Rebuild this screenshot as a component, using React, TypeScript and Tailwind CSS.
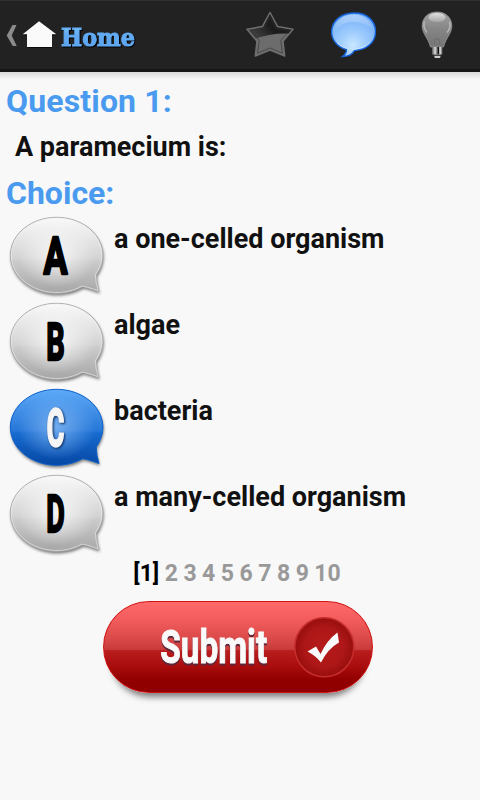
import { useState } from "react";

const choices = [
  { letter: "A", text: "a one-celled organism", x: 36, width: 24 },
  { letter: "B", text: "algae", x: 38.8, width: 18.5 },
  { letter: "C", text: "bacteria", x: 39.2, width: 17.5 },
  { letter: "D", text: "a many-celled organism", x: 38.8, width: 18.5 },
];

const pages = [2, 3, 4, 5, 6, 7, 8, 9, 10];

const BUBBLE =
  "M88.7 62.5 A46.3 38 0 1 0 75 74.3 Q79 74.5 91.5 79 Q89 71 88.7 62.5 Z";

const HomeLink = () => (
  <a className="flex h-full items-center">
    <svg width="144" height="72" viewBox="0 0 144 72">
      <defs>
        <linearGradient id="homeText" x1="0" y1="0" x2="0" y2="1">
          <stop offset="0.2" stopColor="#75bdf5" />
          <stop offset="0.45" stopColor="#61aaf2" />
          <stop offset="1" stopColor="#5ba1ee" />
        </linearGradient>
      </defs>
      <path d="M12.5 26h4L11.7 36.5l5 10.5h-4L6.7 36.5z" fill="#8b8b8b" />
      <path d="M39.5 23.5 57 36.5h-5V49H27.5V36.5h-4.5z" fill="#000" opacity="0.7" />
      <path d="M39 22.3 56.3 35.3H52V48H27V35.3h-4.3z" fill="#fafafa" />
      <text
        x="61"
        y="46.5"
        textLength="74"
        lengthAdjust="spacingAndGlyphs"
        className="font-['DejaVu_Serif'] text-[24.5px] font-bold drop-shadow-[1px_1.5px_0.5px_#000]"
        fill="url(#homeText)"
        stroke="#61aaf2"
        strokeWidth="1.1"
      >
        Home
      </text>
    </svg>
  </a>
);

const StarIcon = () => (
  <svg width="50" height="50" viewBox="0 0 50 50">
    <defs>
      <linearGradient id="starDark" x1="0" y1="0.6" x2="0.7" y2="0">
        <stop offset="0" stopColor="#565656" />
        <stop offset="0.6" stopColor="#1c1c1c" />
      </linearGradient>
      <clipPath id="starClip">
        <path d="M25 2.5 32.6 16.6 48 19.2 38 31.2 39.7 46 25 40 10.3 46 12 31.2 2 19.2 17.4 16.6z" />
      </clipPath>
    </defs>
    <g clipPath="url(#starClip)">
      <path d="M0 0h50v50H0z" fill="url(#starDark)" />
      <path d="M0 33Q24 21 50 24V50H0z" fill="#6c6c6c" />
    </g>
    <path
      d="M25 2.5 32.6 16.6 48 19.2 38 31.2 39.7 46 25 40 10.3 46 12 31.2 2 19.2 17.4 16.6z"
      fill="none"
      stroke="#6f6f6f"
      strokeWidth="1.5"
      strokeLinejoin="round"
    />
    <path
      d="M25 6.5 31 18.4 44.5 20.5 35.8 30.5 37.4 43.2 25 38 12.6 43.2 14.2 30.5 5.5 20.5 19 18.4z"
      fill="none"
      stroke="#333"
      strokeWidth="0.6"
    />
  </svg>
);

const ChatIcon = () => (
  <svg width="48" height="48" viewBox="0 0 48 48">
    <defs>
      <radialGradient id="chat" cx="0.48" cy="0.74" r="0.7">
        <stop offset="0" stopColor="#c8e7ff" />
        <stop offset="0.45" stopColor="#9dcbfd" />
        <stop offset="1" stopColor="#76b0f8" />
      </radialGradient>
      <linearGradient id="chatGloss" x1="0" y1="0" x2="0" y2="1">
        <stop offset="0" stopColor="#fff" stopOpacity="0.4" />
        <stop offset="1" stopColor="#fff" stopOpacity="0.02" />
      </linearGradient>
    </defs>
    <path
      d="M16.5 38.6C-5 33 -3.5 3 23.5 2C37 1.5 45.5 10 45.5 20.5C45.5 32 36 38.8 24.5 39.6C22 43.5 19 45.5 12.5 45.5Q16.5 43 16.5 38.6Z"
      fill="url(#chat)"
      stroke="#1763dc"
      strokeWidth="1.4"
    />
    <path d="M4 20C5 9 14 3.5 24 3.5S41 10 42 17Q20 3 4 20z" fill="url(#chatGloss)" />
    <path d="M7 31Q13 38.5 24 38T40 31" fill="none" stroke="#d5efff" strokeWidth="0.8" opacity="0.6" />
  </svg>
);

const BulbIcon = () => (
  <svg width="34" height="50" viewBox="0 0 34 50">
    <defs>
      <linearGradient id="bulb" x1="0" y1="0" x2="0" y2="1">
        <stop offset="0" stopColor="#a2a2a2" />
        <stop offset="0.5" stopColor="#858585" />
        <stop offset="1" stopColor="#757575" />
      </linearGradient>
      <linearGradient id="bulbTop" x1="0" y1="0" x2="0" y2="1">
        <stop offset="0" stopColor="#e0e0e0" />
        <stop offset="1" stopColor="#a5a5a5" />
      </linearGradient>
      <linearGradient id="bulbBase">
        <stop offset="0" stopColor="#555" />
        <stop offset="0.3" stopColor="#ddd" />
        <stop offset="0.55" stopColor="#444" />
        <stop offset="0.62" stopColor="#111" />
        <stop offset="0.75" stopColor="#f2f2f2" />
        <stop offset="1" stopColor="#555" />
      </linearGradient>
    </defs>
    <path
      d="M17 2C8 2 2.2 8 2.2 16C2.2 23.5 8 27.5 10.5 37H23.5C26 27.5 31.8 23.5 31.8 16C31.8 8 26 2 17 2z"
      fill="url(#bulb)"
      stroke="#999"
      strokeWidth="0.8"
    />
    <ellipse cx="17" cy="7.5" rx="8.5" ry="4.5" fill="url(#bulbTop)" />
    <path d="M4.5 11.5Q2.5 17.5 7 22.5M29.5 11.5Q31.5 17.5 27 22.5" fill="none" stroke="#b5b5b5" strokeWidth="1.6" />
    <path d="M14.5 34V29h5v5" fill="none" stroke="#6c6c6c" strokeWidth="0.8" />
    <path d="M12 37h10.5v7.5H12z" fill="url(#bulbBase)" />
    <path d="M13.5 44.5h7.5L20 48h-5z" fill="#ccc" />
    <path d="M13.5 45.3h7.5" stroke="#222" />
  </svg>
);

const Bubble = ({
  letter,
  x,
  width,
  active,
}: {
  letter: string;
  x: number;
  width: number;
  active: boolean;
}) => (
  <svg
    width="102"
    height="86"
    viewBox="0.5 -0.5 102 86"
    className="shrink-0 overflow-visible"
  >
    <defs>
      <linearGradient id={`bg-${letter}`} x1="0" y1="0" x2="0" y2="1">
        <stop offset="0" stopColor={active ? "#5eaaf8" : "#fafafa"} />
        <stop offset="0.54" stopColor={active ? "#2777d8" : "#d3d3d3"} />
        <stop offset="0.58" stopColor={active ? "#176bcf" : "#cbcbcb"} />
        <stop offset="1" stopColor={active ? "#0647a4" : "#a6a6a6"} />
      </linearGradient>
      <radialGradient id={`glow-${letter}`} cx="0.5" cy="0.5" r="0.42">
        <stop offset="0" stopColor={active ? "#8abcf5" : "#fff"} stopOpacity="0.75" />
        <stop offset="1" stopColor={active ? "#8abcf5" : "#fff"} stopOpacity="0" />
      </radialGradient>
      <filter id={`blur-${letter}`} x="-20%" y="-20%" width="140%" height="140%">
        <feGaussianBlur stdDeviation="1.4" />
      </filter>
    </defs>
    <path
      d={BUBBLE}
      fill="#000"
      opacity="0.5"
      transform="translate(0.8 2.2)"
      filter={`url(#blur-${letter})`}
    />
    <path
      d={BUBBLE}
      fill={`url(#bg-${letter})`}
      stroke={active ? "#0c62cc" : "#aaa"}
      strokeWidth="1"
    />
    <path d={BUBBLE} fill={`url(#glow-${letter})`} />
    {!active && (
      <path
        d={BUBBLE}
        fill="none"
        stroke="#f0f0f0"
        strokeWidth="1"
        opacity="0.6"
        transform="translate(1 0.9) scale(0.979)"
      />
    )}
    <text
      x={x}
      y="61.2"
      textLength={width}
      lengthAdjust="spacingAndGlyphs"
      className={
        active
          ? "font-['Roboto'] text-[52px] font-bold drop-shadow-[1.5px_1.5px_1px_#0a2a5c]"
          : "font-['Roboto'] text-[52px] font-bold"
      }
      fill={active ? "#f5f5f5" : "#000"}
      stroke={active ? "#f5f5f5" : "#000"}
      strokeWidth="2.4"
      strokeLinejoin="round"
    >
      {letter}
    </text>
  </svg>
);

const SubmitButton = () => (
  <button className="relative left-[-2.5px] mx-auto block h-[92px] w-[270px] rounded-full border border-[#d01414] bg-[linear-gradient(180deg,#ff6969_0%,#f25c5c_20%,#d94848_42%,#c83a3a_53%,#b91d1d_54%,#a80c0c_72%,#920000_86%,#900000_100%)] shadow-[0_12px_6px_-8px_rgba(0,0,0,0.5)]">
    <svg width="268" height="90" viewBox="1 1 268 90" className="block">
      <defs>
        <radialGradient id="disc">
          <stop offset="0" stopColor="#b51b1b" />
          <stop offset="0.65" stopColor="#ae1717" />
          <stop offset="1" stopColor="#970e0e" />
        </radialGradient>
      </defs>
      <text
        x="57.2"
        y="62"
        textLength="107"
        lengthAdjust="spacingAndGlyphs"
        className="font-['Roboto'] text-[47px] font-bold drop-shadow-[0.5px_2px_0_#5c2639]"
        fill="#fafafa"
        stroke="#fafafa"
        strokeWidth="1"
      >
        Submit
      </text>
      <circle cx="221.3" cy="46.2" r="29.5" fill="url(#disc)" stroke="#c52c2c" strokeWidth="1.6" />
      <path
        d="M204.5 50.5 213 45.5 217.5 53Q224 39 234.5 31.5L236 41.5Q225 47.5 218 61.5Q213 55 204.5 50.5Z"
        fill="#fafafa"
      />
    </svg>
  </button>
);

const App = () => {
  const [selected, setSelected] = useState("C");

  return (
    <div className="h-[800px] w-[480px] overflow-hidden bg-[#f8f8f8] font-['Roboto',sans-serif] font-bold">
      <header className="flex h-[72px] items-center justify-between border-t border-b-[3px] border-t-[#303030] border-b-[#151515] bg-[#222]">
        <HomeLink />
        <div className="flex items-center pr-[26px]">
          <StarIcon />
          <div className="ml-[35px]">
            <ChatIcon />
          </div>
          <div className="ml-[42px]">
            <BulbIcon />
          </div>
        </div>
      </header>
      <div className="h-2 bg-linear-to-b from-[#d9d9d9] to-[#f8f8f8]" />

      <main className="text-[27px] text-[#111]">
        <h1 className="pl-1.5 text-[32px] leading-[42px] tracking-[0.15px] text-[#4a9bef]">
          Question 1:
        </h1>
        <p className="pl-[15px] leading-[50px]">A paramecium is:</p>
        <h2 className="pl-1.5 text-[32px] leading-[42px] text-[#4a9bef]">
          Choice:
        </h2>

        <ul className="-mt-0.5 pl-2">
          {choices.map((choice) => (
            <li
              key={choice.letter}
              className="flex h-[86px] items-start"
              onClick={() => setSelected(choice.letter)}
            >
              <Bubble
                letter={choice.letter}
                x={choice.x}
                width={choice.width}
                active={selected === choice.letter}
              />
              <span className="pt-[7px] pl-1 leading-10 whitespace-nowrap">
                {choice.text}
              </span>
            </li>
          ))}
        </ul>

        <nav className="flex h-[45px] justify-center gap-[5.5px] pt-px pr-[6px] text-[23px] leading-[34px]">
          <span className="text-black">[1]</span>
          {pages.map((page) => (
            <span key={page} className="text-[#999]">
              {page}
            </span>
          ))}
        </nav>
        <SubmitButton />
      </main>
    </div>
  );
};

export default App;
